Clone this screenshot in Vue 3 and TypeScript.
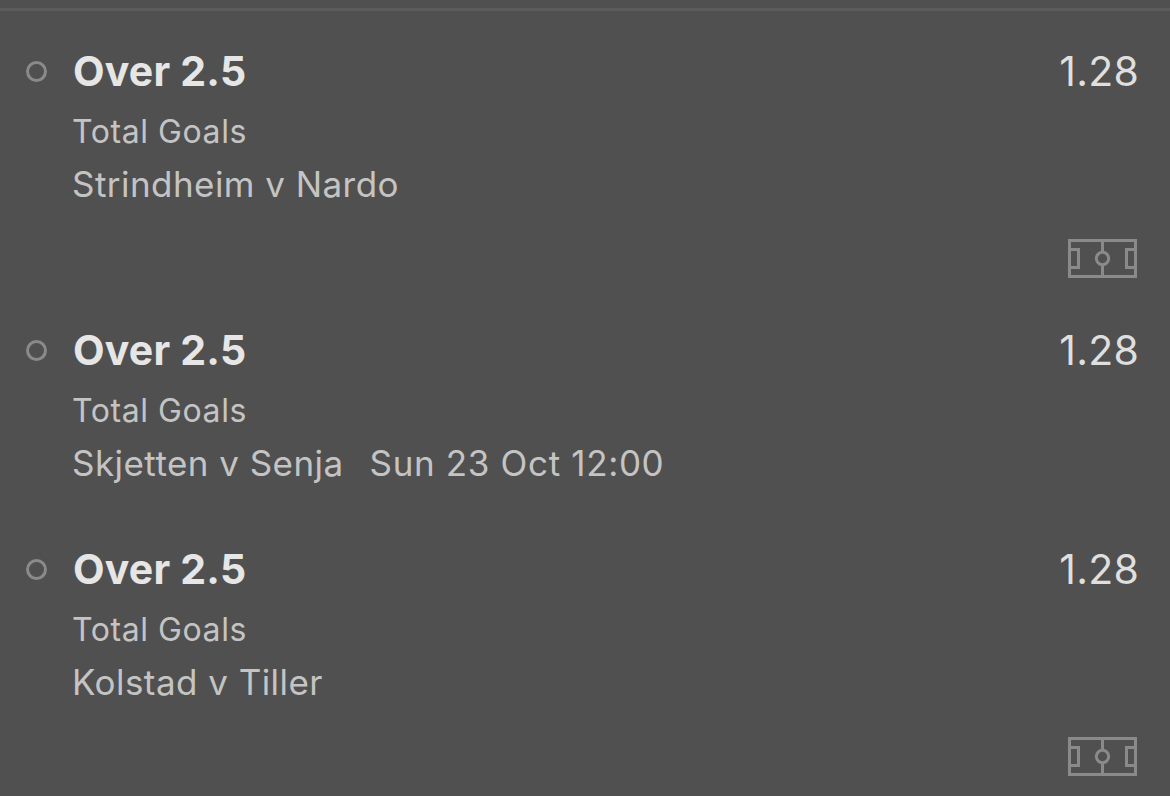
<script setup lang="ts">
interface Selection {
  pick: string
  market: string
  match: string
  time?: string
  odds: string
  pitch: boolean
}

const selections: Selection[] = [
  { pick: 'Over 2.5', market: 'Total Goals', match: 'Strindheim v Nardo', odds: '1.28', pitch: true },
  { pick: 'Over 2.5', market: 'Total Goals', match: 'Skjetten v Senja', time: 'Sun 23 Oct 12:00', odds: '1.28', pitch: false },
  { pick: 'Over 2.5', market: 'Total Goals', match: 'Kolstad v Tiller', odds: '1.28', pitch: true },
]
</script>

<template>
  <main class="slip">
    <article v-for="(s, i) in selections" :key="i" class="selection" :class="{ live: s.pitch }">
      <span class="ring"></span>
      <div class="details">
        <div class="pick">{{ s.pick }}</div>
        <div class="market">{{ s.market }}</div>
        <div class="match"><span>{{ s.match }}</span><span v-if="s.time" class="time">{{ s.time }}</span></div>
      </div>
      <div class="side">
        <div class="odds">{{ s.odds }}</div>
        <svg v-if="s.pitch" class="pitch" width="69" height="39" viewBox="0 0 69 39" fill="none" stroke="#8a8a8a" stroke-width="3">
          <rect x="1.5" y="1.5" width="66" height="36" />
          <path d="M34.5 1.5V13M34.5 26V37.5M1.5 10.5H10.5V28.5H1.5M67.5 10.5H58.5V28.5H67.5" />
          <circle cx="34.5" cy="19.5" r="6.2" />
        </svg>
      </div>
    </article>
  </main>
</template>

<style>
body { margin: 0; background: #505050; }
</style>

<style scoped>
.slip {
  box-sizing: border-box;
  height: 796px;
  overflow: hidden;
  padding-top: 8px;
  background: #505050;
  font-family: Inter, "Liberation Sans", sans-serif;
}
.slip::before { content: ""; display: block; height: 3px; background: #5c5c5c; }
.selection {
  display: flex;
  box-sizing: border-box;
  height: 219px;
  padding: 34px 32px 0 26px;
}
.selection.live { height: 279px; }
.ring {
  box-sizing: border-box;
  width: 21px;
  height: 21px;
  margin: 16px 26px 0 0;
  border: 3px solid #8a8a8a;
  border-radius: 50%;
}
.details { flex: 1; color: #c4c4c4; white-space: nowrap; }
.pick { height: 52px; line-height: 52px; font-size: 41px; font-weight: 700; letter-spacing: 0.2px; color: #e6e6e6; }
.market { height: 52px; margin-top: 9px; margin-left: -1px; line-height: 52px; font-size: 32px; letter-spacing: 0.57px; }
.match { height: 52px; margin-left: -1px; line-height: 52px; font-size: 35px; letter-spacing: 0.45px; }
.time { margin-left: 26px; letter-spacing: 0.65px; }
.side { display: flex; flex-direction: column; align-items: flex-end; }
.odds { height: 52px; margin-right: -1px; line-height: 52px; font-size: 41px; letter-spacing: 0.2px; color: #dfdfdf; }
.pitch { margin: 142px 1px 0 0; }
</style>
